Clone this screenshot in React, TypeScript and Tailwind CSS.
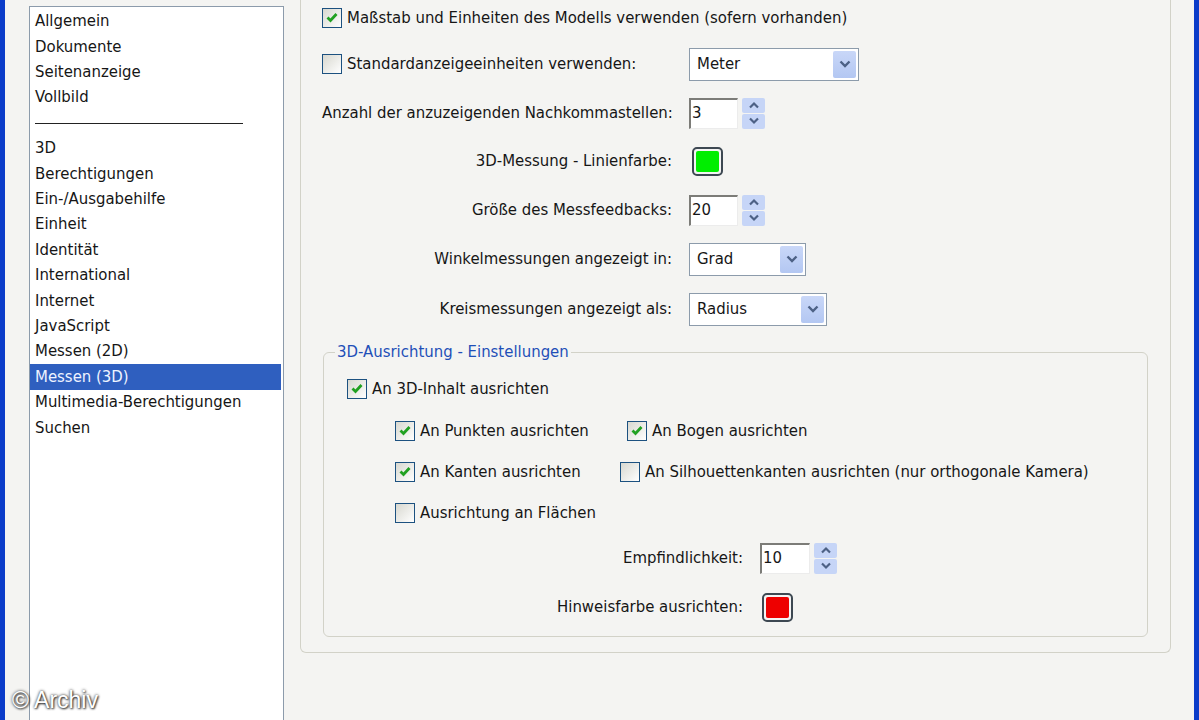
import React from "react";

const PAGES = [
  "Allgemein",
  "Dokumente",
  "Seitenanzeige",
  "Vollbild",
  "-",
  "3D",
  "Berechtigungen",
  "Ein-/Ausgabehilfe",
  "Einheit",
  "Identität",
  "International",
  "Internet",
  "JavaScript",
  "Messen (2D)",
  "Messen (3D)",
  "Multimedia-Berechtigungen",
  "Suchen",
];

function Check({ on }: { on?: boolean }) {
  return (
    <span className="flex h-[20px] w-[20px] shrink-0 items-center justify-center border border-[#1c5180] bg-linear-to-br from-[#d8d8d0] to-white">
      {on && (
        <svg width="14" height="14" viewBox="0 0 14 14">
          <path d="M2.5 6.5 L5.5 9.5 L11.5 3" fill="none" stroke="#21a121" strokeWidth="2.8" />
        </svg>
      )}
    </span>
  );
}

function CheckLabel({ on, children }: { on?: boolean; children: React.ReactNode }) {
  return (
    <label className="flex items-center gap-[5px]">
      <Check on={on} />
      <span>{children}</span>
    </label>
  );
}

function Chevron({ up }: { up?: boolean }) {
  return (
    <svg width="12" height="8" viewBox="0 0 12 8">
      <path
        d={up ? "M2 6.5 L6 2.5 L10 6.5" : "M2 1.5 L6 5.5 L10 1.5"}
        fill="none"
        stroke="#4d6185"
        strokeWidth="2.2"
      />
    </svg>
  );
}

function Spin({ value, w }: { value: string; w: string }) {
  return (
    <div className="flex items-center gap-[4px]">
      <div className={`flex h-[31px] items-center border-t-2 border-l-2 border-r border-b border-t-[#7c7c78] border-l-[#7c7c78] border-r-[#ececec] border-b-[#ececec] bg-white pl-[1px] ${w}`}>
        {value}
      </div>
      <div className="flex w-[23px] flex-col gap-px">
        <span className="flex h-[15px] items-center justify-center rounded-[2px] bg-[#c6d5f7]">
          <Chevron up />
        </span>
        <span className="flex h-[15px] items-center justify-center rounded-[2px] bg-[#c6d5f7]">
          <Chevron />
        </span>
      </div>
    </div>
  );
}

function Select({ value, w }: { value: string; w: string }) {
  return (
    <div className={`flex h-[33px] items-center border border-[#8c9bab] bg-white p-[2px] ${w}`}>
      <span className="flex-1 pl-[5px]">{value}</span>
      <span className="flex h-full w-[23px] items-center justify-center rounded-[2px] bg-linear-to-b from-[#c9d7f8] to-[#b3c7f2]">
        <svg width="14" height="10" viewBox="0 0 14 10">
          <path d="M2.5 2.5 L7 7 L11.5 2.5" fill="none" stroke="#4d6185" strokeWidth="2.4" />
        </svg>
      </span>
    </div>
  );
}

function Swatch({ color }: { color: string }) {
  return (
    <span className="flex h-[29px] w-[31px] rounded-[5px] border-2 border-[#3d4852] bg-[#f4f4f4] p-[2px]">
      <span className={`flex-1 rounded-[2px] ${color}`} />
    </span>
  );
}

export default function App() {
  return (
    <div className="relative flex h-[720px] w-[1199px] overflow-hidden bg-[#f4f4f2] font-['DejaVu_Sans_Condensed','Liberation_Sans',sans-serif] text-[16.6px] text-[#161616]">
      <div className="w-[5px] shrink-0 bg-[#0b3cc9]" />

      {/* page list */}
      <div className="ml-[24px] mt-[6px] h-[760px] w-[255px] shrink-0 border border-[#8c9bab] bg-white pr-[2px] pt-[2px]">
        {PAGES.map((p) =>
          p === "-" ? (
            <div key="sep" className="flex h-[25.4px] items-center pl-[5px]">
              <div className="h-[1.5px] w-[208px] bg-[#222]" />
            </div>
          ) : (
            <div
              key={p}
              className={`flex h-[25.4px] items-center pl-[5px] ${p === "Messen (3D)" ? "bg-[#2f5fbf] text-[#eef3ff]" : ""}`}
            >
              {p}
            </div>
          )
        )}
      </div>

      {/* settings */}
      <div className="ml-[16px] h-[653px] w-[871px] shrink-0 rounded-b-[6px] border-x border-b border-[#d2d2c8] pl-[21px]">
        <div className="flex h-[36px] items-center">
          <CheckLabel on>Maßstab und Einheiten des Modells verwenden (sofern vorhanden)</CheckLabel>
        </div>
        <div className="flex h-[56px] items-center">
          <div className="w-[367px]">
            <CheckLabel>Standardanzeigeeinheiten verwenden:</CheckLabel>
          </div>
          <Select value="Meter" w="w-[170px]" />
        </div>
        <div className="flex h-[42px] items-center gap-[17px]">
          <span className="w-[350px] whitespace-nowrap text-right">Anzahl der anzuzeigenden Nachkommastellen:</span>
          <Spin value="3" w="w-[49px]" />
        </div>
        <div className="flex h-[54px] items-center gap-[20px]">
          <span className="w-[350px] text-right">3D-Messung - Linienfarbe:</span>
          <Swatch color="bg-[#00ee00]" />
        </div>
        <div className="flex h-[44px] items-center gap-[17px]">
          <span className="w-[350px] text-right">Größe des Messfeedbacks:</span>
          <Spin value="20" w="w-[49px]" />
        </div>
        <div className="flex h-[54px] items-center gap-[17px]">
          <span className="w-[350px] text-right">Winkelmessungen angezeigt in:</span>
          <Select value="Grad" w="w-[117px]" />
        </div>
        <div className="flex h-[46px] items-center gap-[17px]">
          <span className="w-[350px] text-right">Kreismessungen angezeigt als:</span>
          <Select value="Radius" w="w-[138px]" />
        </div>

        <fieldset className="ml-px mt-[10px] w-[825px] rounded-[6px] border border-[#d2d2c8] px-[11px] pb-[4px]">
          <legend className="px-[2px] leading-[20px] text-[#1f4fb8]">3D-Ausrichtung - Einstellungen</legend>
          <div className="pt-[6px]">
            <div className="flex h-[42px] items-center pl-[12px]">
              <CheckLabel on>An 3D-Inhalt ausrichten</CheckLabel>
            </div>
            <div className="flex h-[42px] items-center pl-[60px]">
              <div className="w-[232px]">
                <CheckLabel on>An Punkten ausrichten</CheckLabel>
              </div>
              <CheckLabel on>An Bogen ausrichten</CheckLabel>
            </div>
            <div className="flex h-[41px] items-center pl-[60px]">
              <div className="w-[225px]">
                <CheckLabel on>An Kanten ausrichten</CheckLabel>
              </div>
              <CheckLabel>An Silhouettenkanten ausrichten (nur orthogonale Kamera)</CheckLabel>
            </div>
            <div className="flex h-[41px] items-center pl-[60px]">
              <CheckLabel>Ausrichtung an Flächen</CheckLabel>
            </div>
            <div className="flex h-[48px] items-center gap-[17px]">
              <span className="w-[408px] text-right">Empfindlichkeit:</span>
              <Spin value="10" w="w-[50px]" />
            </div>
            <div className="flex h-[50px] items-center gap-[19px]">
              <span className="w-[408px] text-right">Hinweisfarbe ausrichten:</span>
              <Swatch color="bg-[#ee0000]" />
            </div>
          </div>
        </fieldset>
      </div>

      <div className="ml-auto w-[5px] shrink-0 bg-[#0b3cc9]" />

      <span className="absolute left-[12px] top-[683px] font-['Liberation_Sans',sans-serif] text-[23px] text-white [text-shadow:0_0_3px_rgba(0,0,0,0.9),1px_1px_2px_rgba(0,0,0,0.7)]">
        © Archiv
      </span>
    </div>
  );
}
